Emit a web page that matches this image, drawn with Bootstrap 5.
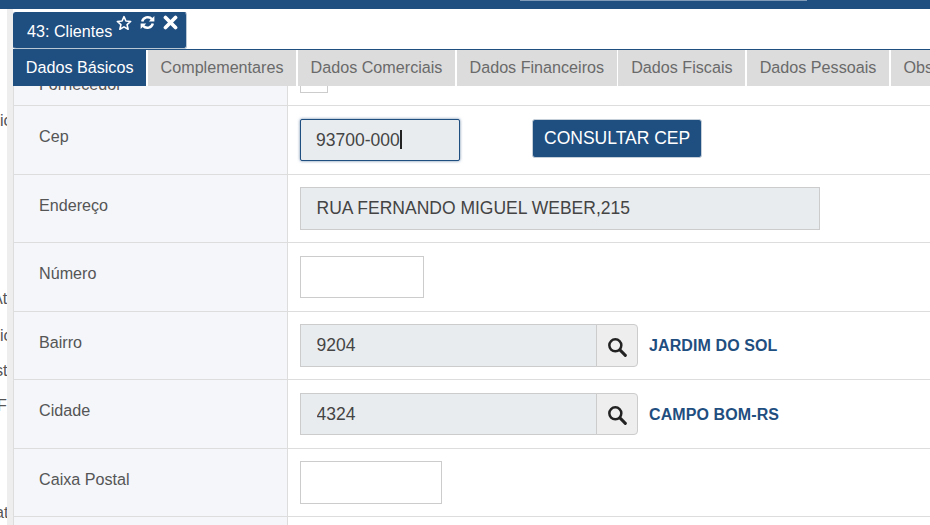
<!DOCTYPE html>
<html lang="pt-BR">
<head>
  <meta charset="UTF-8">
  <title>43: Clientes</title>
  <meta name="viewport" content="width=device-width, initial-scale=1">
  <link href="https://cdn.jsdelivr.net/npm/bootstrap@5.3.3/dist/css/bootstrap.min.css" rel="stylesheet">
  <style>
    html, body {
      height: 525px;
      overflow: hidden;
    }
    body {
      font-family: "Liberation Sans", Arial, sans-serif;
      font-size: 16.15px;
      color: #555;
      background: #fff;
    }
    .topo {
      height: 9px;
      background: #1f4e80;
    }
    .topo-busca {
      width: 287px;
      height: 1px;
      margin-left: 520px;
      background: #7f9bb8;
    }
    .area {
      height: 516px;
    }
    .lado {
      width: 13px;
      flex: none;
      border-right: 6px solid #eee;
      overflow: hidden;
    }
    .lado-item {
      height: 20px;
      line-height: 20px;
      white-space: nowrap;
    }
    .lado-a { margin-top: 101px; }
    .lado-b { margin-top: 158px; margin-left: -8px; }
    .lado-c { margin-top: 17px; }
    .lado-d { margin-top: 15px; margin-left: -5px; }
    .lado-e { margin-top: 15px; margin-left: -3px; }
    .lado-f { margin-top: 87px; margin-left: -5px; }
    .janela {
      min-width: 0;
      overflow: hidden;
    }
    .janela-titulo {
      width: 174px;
      height: 37px;
      margin-top: 3px;
      padding: 0 0 0 13px;
      color: #fff;
      background: #1f4e80;
      border: 1px solid #b9c6d4;
      border-top-color: #1f4e80;
      border-left-color: #1f4e80;
      border-radius: 3px;
      line-height: 37px;
      white-space: nowrap;
    }
    .janela-icones {
      gap: 8px;
      margin-left: 4px;
      margin-top: 2px;
    }
    .abas {
      flex-wrap: nowrap;
      width: 940px;
      border-top: 1px solid #1f4e80;
      border-bottom: 0;
    }
    .abas .nav-link {
      height: 36px;
      margin: 0 1.5px 0 0;
      padding: 0 12.8px;
      line-height: 35px;
      color: #6a6a6a;
      background: #dcdcdc;
      border: 0;
      border-radius: 0;
      white-space: nowrap;
    }
    .abas .nav-link.active {
      color: #fff;
      background: #1f4e80;
    }
    .corpo {
      height: 439px;
      overflow: hidden;
    }
    .campos {
      margin-top: -48.5px;
    }
    .linha {
      height: 68.5px;
      border-bottom: 1px solid #ddd;
    }
    .rotulo {
      width: 275px;
      flex: none;
      padding: 19px 0 0 25px;
      line-height: 22px;
      background: #f4f6fa;
      border-left: 1px solid #ddd;
      border-right: 1px solid #ddd;
    }
    .rotulo-cortado {
      padding-top: 35px;
    }
    .valor {
      padding: 12.75px 0 0 12px;
    }
    .valor .form-control,
    .valor .btn {
      height: 42.5px;
      font-size: 17.5px;
      line-height: 28px;
      border-radius: 0;
    }
    .valor .form-control {
      padding: 6px 15.5px;
      color: #444;
      border: 1px solid #ccc;
    }
    .cx-cep { width: 160px; }
    .cx-endereco { width: 520px; }
    .cx-numero { width: 124px; }
    .cx-busca { width: 338px; }
    .cx-postal { width: 142px; }
    .valor .cx-cep {
      border: 1px solid #1f4e80;
      border-radius: 2px;
      box-shadow: 0 0 3px rgba(31, 78, 128, .7);
      padding-left: 15px;
    }
    .cursor {
      display: inline-block;
      width: 2px;
      height: 19px;
      background: #222;
      vertical-align: -3px;
    }
    .caixa {
      width: 28px;
      height: 28px;
      border: 1px solid #ccc;
      margin-top: 15px;
    }
    .btn-cep {
      margin-left: 72px;
      padding: 0 11px;
      color: #fff;
      background: #1f4e80;
      border: 1px solid #c5cfda;
    }
    .valor .btn-cep {
      border-radius: 3px;
      height: 39px;
    }
    .btn-lupa {
      width: 42px;
      padding: 0;
      background: #eee;
      border: 1px solid #ccc;
    }
    .valor .btn-lupa {
      border-radius: 0 4px 4px 0;
    }
    .nome-busca {
      margin-left: 11px;
      padding-top: 1px;
      font-size: 16px;
      font-weight: 700;
      letter-spacing: .1px;
      color: #1f4e80;
    }
  </style>
</head>
<body>
  <div class="topo"><div class="topo-busca"></div></div>
  <div class="area d-flex">
    <div class="lado">
      <div class="lado-item lado-a">ic</div>
      <div class="lado-item lado-b">At</div>
      <div class="lado-item lado-c">ic</div>
      <div class="lado-item lado-d">st</div>
      <div class="lado-item lado-e">F</div>
      <div class="lado-item lado-f">at</div>
    </div>
    <div class="janela flex-grow-1">
      <div class="janela-titulo d-flex">
        <span>43: Clientes</span>
        <div class="janela-icones d-flex align-items-start">
          <svg width="16" height="16" viewBox="0 0 24 24"><polygon points="12,2.5 14.9,9 22,9.7 16.6,14.4 18.2,21.4 12,17.8 5.8,21.4 7.4,14.4 2,9.7 9.1,9" fill="none" stroke="#fff" stroke-width="2.4" stroke-linejoin="round"/></svg>
          <svg width="15" height="15" viewBox="0 0 24 24" fill="none" stroke="#fff" stroke-width="4"><path d="M3.5 10.5A9 9 0 0 1 19 6.5"/><path d="M20.5 13.5A9 9 0 0 1 5 17.5"/><path d="M23 1.5V10.5H14Z" fill="#fff" stroke="none"/><path d="M1 22.5V13.5H10Z" fill="#fff" stroke="none"/></svg>
          <svg width="15" height="15" viewBox="0 0 24 24" fill="none" stroke="#fff" stroke-width="6" stroke-linecap="round"><path d="M4 4L20 20"/><path d="M20 4L4 20"/></svg>
        </div>
      </div>
      <ul class="nav nav-tabs abas">
        <li class="nav-item"><a class="nav-link active" href="#">Dados Básicos</a></li>
        <li class="nav-item"><a class="nav-link" href="#">Complementares</a></li>
        <li class="nav-item"><a class="nav-link" href="#">Dados Comerciais</a></li>
        <li class="nav-item"><a class="nav-link" href="#">Dados Financeiros</a></li>
        <li class="nav-item"><a class="nav-link" href="#">Dados Fiscais</a></li>
        <li class="nav-item"><a class="nav-link" href="#">Dados Pessoais</a></li>
        <li class="nav-item"><a class="nav-link" href="#">Observações</a></li>
      </ul>
      <div class="corpo">
        <div class="campos">
          <div class="linha d-flex">
            <div class="rotulo rotulo-cortado">Fornecedor</div>
            <div class="valor"><div class="caixa"></div></div>
          </div>
          <div class="linha d-flex">
            <div class="rotulo">Cep</div>
            <div class="valor d-flex align-items-start">
              <div class="form-control cx-cep bg-body-secondary">93700-000<span class="cursor"></span></div>
              <button class="btn btn-cep" type="button">CONSULTAR CEP</button>
            </div>
          </div>
          <div class="linha d-flex">
            <div class="rotulo">Endereço</div>
            <div class="valor"><input class="form-control cx-endereco bg-body-secondary" value="RUA FERNANDO MIGUEL WEBER,215" readonly></div>
          </div>
          <div class="linha d-flex">
            <div class="rotulo">Número</div>
            <div class="valor"><input class="form-control cx-numero"></div>
          </div>
          <div class="linha d-flex">
            <div class="rotulo">Bairro</div>
            <div class="valor d-flex align-items-center align-self-start">
              <div class="input-group cx-busca">
                <input class="form-control bg-body-secondary" value="9204" readonly>
                <button class="btn btn-lupa" type="button" aria-label="Buscar">
                  <svg width="20" height="20" viewBox="0 0 24 24" fill="none" stroke="#222" stroke-width="3"><circle cx="10" cy="10" r="7.2"/><path d="M15.5 15.5L22 22" stroke-width="3.6" stroke-linecap="round"/></svg>
                </button>
              </div>
              <span class="nome-busca">JARDIM DO SOL</span>
            </div>
          </div>
          <div class="linha d-flex">
            <div class="rotulo">Cidade</div>
            <div class="valor d-flex align-items-center align-self-start">
              <div class="input-group cx-busca">
                <input class="form-control bg-body-secondary" value="4324" readonly>
                <button class="btn btn-lupa" type="button" aria-label="Buscar">
                  <svg width="20" height="20" viewBox="0 0 24 24" fill="none" stroke="#222" stroke-width="3"><circle cx="10" cy="10" r="7.2"/><path d="M15.5 15.5L22 22" stroke-width="3.6" stroke-linecap="round"/></svg>
                </button>
              </div>
              <span class="nome-busca">CAMPO BOM-RS</span>
            </div>
          </div>
          <div class="linha d-flex">
            <div class="rotulo">Caixa Postal</div>
            <div class="valor"><input class="form-control cx-postal"></div>
          </div>
          <div class="linha d-flex">
            <div class="rotulo"></div>
            <div class="valor"></div>
          </div>
        </div>
      </div>
    </div>
  </div>
  <script src="https://cdn.jsdelivr.net/npm/bootstrap@5.3.3/dist/js/bootstrap.bundle.min.js"></script>
</body>
</html>
